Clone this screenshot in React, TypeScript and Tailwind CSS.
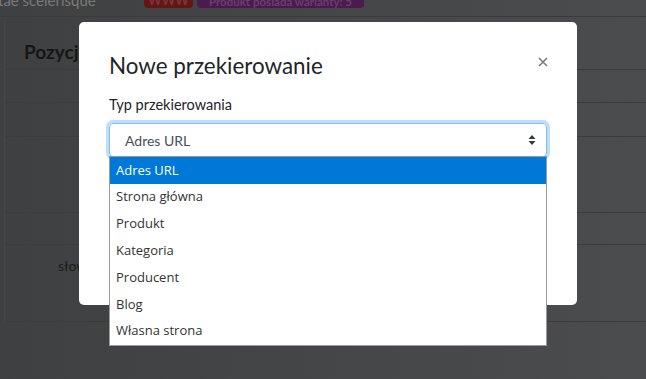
import { useState } from "react";

const options = [
  "Adres URL",
  "Strona główna",
  "Produkt",
  "Kategoria",
  "Producent",
  "Blog",
  "Własna strona",
];

export default function App() {
  const [selected] = useState(0);

  return (
    <div className="relative w-[646px] h-[379px] overflow-hidden bg-gradient-to-r from-[#3f4041] to-[#4b4c4d] font-['Lato',sans-serif]">
      {/* dimmed page behind the modal */}
      <div className="flex items-end h-[17px] border-b border-[#3a3b3c] pb-[8px] leading-none">
        <span className="text-[15px] text-[#7a7a7a] -ml-[2px] w-[146px]">tae scelerisque</span>
        <span className="h-[16px] w-[49px] justify-center rounded-[4px] bg-[#621717] text-[#7e3434] text-[13px] font-bold flex items-end pb-[1px]">
          WWW
        </span>
        <span className="ml-[4px] h-[16px] w-[167px] justify-center rounded-[4px] bg-[#4a1b4d] text-[#6c3e70] text-[11.5px] font-bold flex items-end pb-[1px]">
          Produkt posiada warianty: 5
        </span>
      </div>
      <div className="ml-[4px] mt-[1px] border-l border-[#454647] rounded-tl-[4px]">
        <div className="h-[52px] border-b border-[#3b3c3d] pl-[19px] pt-[20px]">
          <span className="text-[19px] font-bold text-[#161616]">Pozycje zamówienia</span>
        </div>
        <div className="h-[33px] border-b border-[#3b3c3d]" />
        <div className="h-[34px] border-b border-[#3b3c3d]" />
        <div className="h-[76px] border-b border-[#3b3c3d]" />
        <div className="h-[32px] border-b border-[#3b3c3d]" />
        <div className="h-[77px] border-b border-[#3b3c3d] pl-[53px] pt-[8px]">
          <span className="text-[14px] text-[#1b1b1b]">słowa kluczowe</span>
        </div>
      </div>

      {/* modal */}
      <div className="absolute left-[79px] top-[22px] w-[498px] h-[283px] bg-white rounded-[5px] px-[30px] pt-[29px]">
        <div className="flex items-start justify-between">
          <h2 className="text-[22.4px] leading-[30px] text-[#212529]">Nowe przekierowanie</h2>
          <svg width="10" height="10" viewBox="0 0 10 10" className="mt-[6px] -mr-[1px]">
            <path d="M1 1 L9 9 M9 1 L1 9" stroke="#7a7a7a" strokeWidth="1.6" />
          </svg>
        </div>
        <div className="mt-[15px] text-[14.5px] text-[#212529] leading-[18px]">Typ przekierowania</div>
        <div className="mt-[9px] h-[34px] rounded-[4px] border border-[#80bdff] shadow-[0_0_0_3px_rgba(0,123,255,0.25)] flex items-center justify-between pl-[15px] pr-[10px]">
          <span className="text-[14px] text-[#495057]">Adres URL</span>
          <svg width="8" height="12" viewBox="0 0 8 12">
            <path d="M4 1 L7.5 5 H0.5 Z" fill="#343a40" />
            <path d="M4 11 L7.5 7 H0.5 Z" fill="#343a40" />
          </svg>
        </div>
      </div>

      {/* open select list */}
      <ul className="absolute left-[109px] top-[156px] w-[438px] border border-[#9a9a9a] bg-white font-['Open_Sans',sans-serif]">
        {options.map((o, i) => (
          <li
            key={o}
            className={
              i === selected
                ? "h-[26.8px] flex items-center pl-[6px] text-[13px] bg-[#0078d7] text-white"
                : "h-[26.8px] flex items-center pl-[6px] text-[13px] text-[#333]"
            }
          >
            {o}
          </li>
        ))}
      </ul>
    </div>
  );
}
